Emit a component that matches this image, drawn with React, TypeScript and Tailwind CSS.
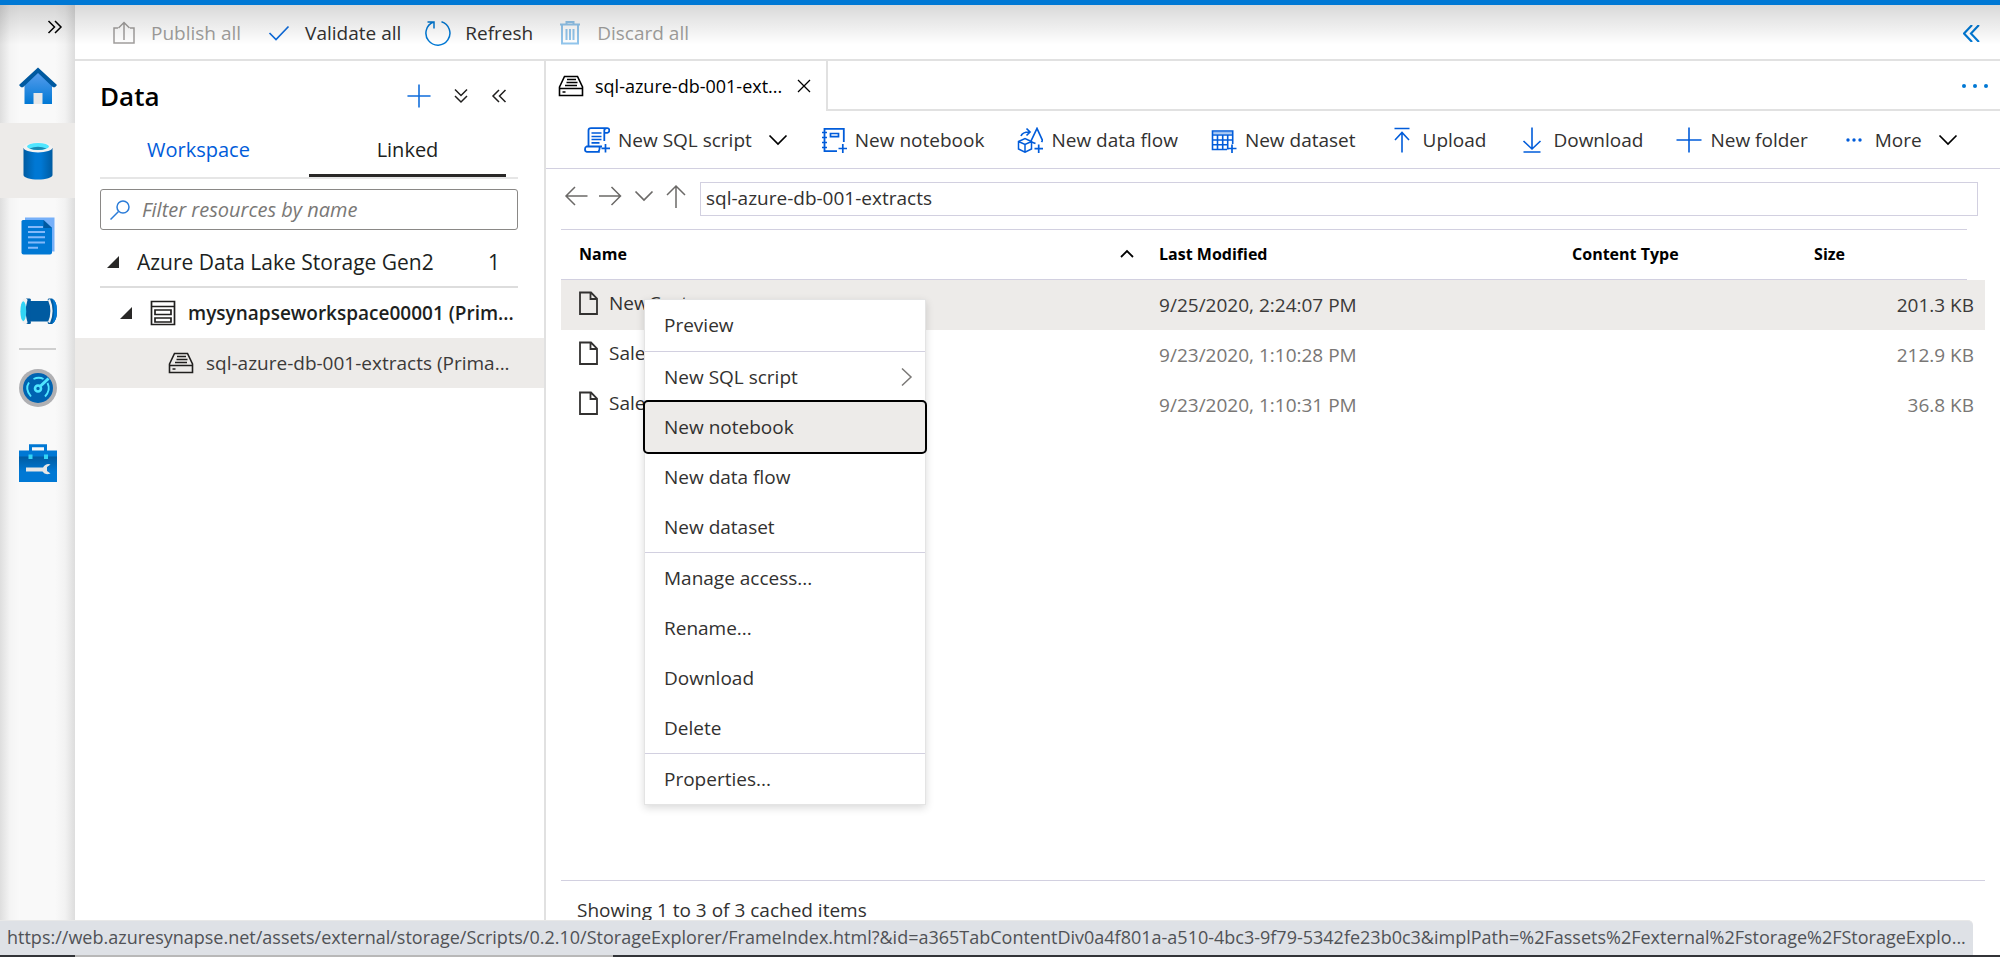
import { useState, type ReactNode } from "react";
import clsx from "clsx";

type IconProps = { className?: string };

function Svg({
  size = 26,
  box = "0 0 26 26",
  className,
  children,
}: {
  size?: number;
  box?: string;
  className?: string;
  children: ReactNode;
}) {
  return (
    <svg
      width={size}
      height={size}
      viewBox={box}
      fill="none"
      stroke="currentColor"
      strokeWidth="1.5"
      className={clsx("shrink-0", className)}
      aria-hidden
    >
      {children}
    </svg>
  );
}

/* ---------- line icons ---------- */

const PublishIcon = () => (
  <Svg>
    <path d="M7 8H3v15h20V8h-4M13 20V3M7.500 8L13 2.500 18.500 8" />
  </Svg>
);

const CheckIcon = () => (
  <Svg>
    <path d="M4.500 13l6.500 6.500L23.500 6.500" strokeWidth="1.700" />
  </Svg>
);

const RefreshIcon = () => (
  <Svg>
    <path d="M16.500 1.700A12 12 0 1 1 8.500 2M2.500 2H9v6.500" strokeWidth="1.500" />
  </Svg>
);

const TrashIcon = () => (
  <Svg>
    <path d="M3 4.500h20M5 5v18.500h16V5M9.500 4.500V2h7v2.500M9.500 9v11M13 9v11M16.500 9v11" strokeWidth="2" />
  </Svg>
);

const DriveIcon = ({ className }: IconProps) => (
  <Svg className={className}>
    <path d="M1.500 14L6.500 3.500h13L24.500 14v8.500h-23zM1.500 15.500h23M4.500 19h3" strokeWidth="1.600" />
    <path d="M9 6.500h9M8.500 9.500h11M7 12.500h12" strokeWidth="1.400" />
  </Svg>
);

const ContainerIcon = () => (
  <Svg>
    <path d="M1.500 1.500h23v23h-23zM1.500 6.500h23M5 10h16v4.500H5zM5 18h16v4H5z" strokeWidth="1.700" />
  </Svg>
);

const ScriptIcon = () => (
  <Svg>
    <path
      d="M4.500 19.500V3.500Q4.500 1.200 7 1.200h16.300q2 0 2 2.200t-2 2.400h-3V14M20.300 6V3.500q0-2.200 2.500-2.300M18 19.500H2.500Q1 20 1 22.300t1.800 2.500h13M4.500 19.500h11q.5 3-1 5"
      strokeWidth="1.800"
    />
    <path d="M7.500 6h10M7.500 9.500h10M7.500 12.500h10M7.500 15.800h8M21.500 17v8.500M17.500 21.300h8.500" strokeWidth="1.700" />
  </Svg>
);

const NotebookIcon = () => (
  <Svg>
    <path d="M16 24.200H3.500V1.800h19.300V15" strokeWidth="1.800" />
    <path d="M1 5.500h5M1 10.500h5M1 15.500h5M1 20.500h5M9.500 6.500h8v3.200h-8zM21.800 17v9M17.500 21.500h8.500" strokeWidth="1.700" />
  </Svg>
);

const DataFlowIcon = () => (
  <Svg>
    <path d="M1.500 14.500l6.500-3 6.500 3v7.500L8 25.200 1.500 22zM1.500 14.500L8 17.500l6.500-3M8 17.500v7.500" />
    <path d="M4 9Q5.500 5 12 5M9.500 1.500L13 5 9.500 8.500M14 14l6-12.500 5.500 12-1 1.500M14.500 15l4 1.500M21.700 17.500v8.500M17.500 21.700H26" strokeWidth="1.700" />
  </Svg>
);

const DatasetIcon = () => (
  <Svg>
    <path d="M16 22.500H1.500V4h20.200v13M1.500 8h20M1.500 13h20M1.500 17.800h15M6.500 8v14.500M11.700 8v14.500M16.700 8v14.500" strokeWidth="1.600" />
    <path d="M2 5.800h19" strokeWidth="2" opacity=".4" />
    <path d="M21 17.500V26M17 21.500h8.500" strokeWidth="1.700" />
  </Svg>
);

const UploadIcon = () => (
  <Svg>
    <path d="M5.500 1.500h15M13 25.500V5.500M6 13l7-7.500 7 7.500" strokeWidth="1.600" />
  </Svg>
);

const DownloadIcon = () => (
  <Svg>
    <path d="M4.500 25h17M13 .5v21.500M4.500 14l8.500 8 8.500-8" strokeWidth="1.600" />
  </Svg>
);

const PlusIcon = () => (
  <Svg>
    <path d="M13 .5v25M.5 13h25" strokeWidth="1.600" />
  </Svg>
);

const MoreIcon = () => (
  <Svg>
    <g fill="currentColor" stroke="none">
      <circle cx="7" cy="13" r="1.700" />
      <circle cx="13" cy="13" r="1.700" />
      <circle cx="19" cy="13" r="1.700" />
    </g>
  </Svg>
);

const ChevronDown = () => (
  <Svg size={20} box="0 0 20 20">
    <path d="M1.500 5.500L10 14l8.500-8.500" strokeWidth="1.700" />
  </Svg>
);

const ChevronsIcon = ({ className }: IconProps) => (
  <Svg size={16} box="0 0 16 16" className={className}>
    <path d="M8 2L2 8l6 6M14.500 2l-6 6 6 6" strokeWidth="1.500" />
  </Svg>
);

const FileIcon = () => (
  <Svg>
    <path d="M5 2.500h11l6 6V24H5zM15.500 2.500v6.500h6.500" strokeWidth="1.800" />
  </Svg>
);

const Caret = () => (
  <svg width="12" height="12" viewBox="0 0 12 12" className="shrink-0" aria-hidden>
    <path d="M12 0v12H0z" fill="#292827" />
  </svg>
);

/* ---------- coloured rail icons ---------- */

const HomeIcon = () => (
  <svg width="38" height="38" viewBox="0 0 38 38" aria-hidden>
    <defs>
      <linearGradient id="home" x1="0" y1="0" x2="0" y2="1">
        <stop offset="0" stopColor="#5ea0ef" />
        <stop offset="1" stopColor="#0078d4" />
      </linearGradient>
    </defs>
    <path d="M19 3L33 16.500V37H5.500V16.500z" fill="url(#home)" />
    <path d="M14.500 26h9v11h-9z" fill="#e8e8e8" />
    <path d="M19 .5L38 18l-2 2.300h-2L19 6 4 20.300H2L0 18z" fill="#0059a0" />
  </svg>
);

const DatabaseIcon = () => (
  <svg width="38" height="38" viewBox="0 0 38 38" aria-hidden>
    <defs>
      <linearGradient id="db" x1="0" y1="0" x2="1" y2="0">
        <stop offset="0" stopColor="#005ba1" />
        <stop offset=".4" stopColor="#0078d4" />
        <stop offset=".6" stopColor="#0078d4" />
        <stop offset="1" stopColor="#005ba1" />
      </linearGradient>
    </defs>
    <path d="M4.500 6v27c0 2.600 6.500 4.500 14.500 4.500s14.500-1.900 14.500-4.500V6z" fill="url(#db)" />
    <ellipse cx="19" cy="5.500" rx="14.500" ry="5" fill="#f2f2f2" />
    <ellipse cx="19" cy="4.500" rx="11" ry="3.500" fill="#50e6ff" />
    <path d="M10.500 6.500Q19 2.900 27.500 6.500 19 9.500 10.500 6.500z" fill="#198ab3" />
  </svg>
);

const DocsIcon = () => (
  <svg width="38" height="38" viewBox="0 0 38 38" aria-hidden>
    <path d="M6 .5h29.500v34H6z" fill="#76b0f9" />
    <path d="M4 3h20.500L33 11v24.500q0 2-2 2H4.500q-2 0-2-2V4.500Q2.500 3 4 3z" fill="#0078d4" />
    <path d="M24.500 3L33 11h-8.500z" fill="#0059a0" />
    <path d="M9 10h15M9 15h17M9 20.300h17M9 25.500h17M9 30.700h10" stroke="#83b9f9" strokeWidth="2" />
  </svg>
);

const PipeIcon = () => (
  <svg width="38" height="38" viewBox="0 0 38 38" aria-hidden>
    <path d="M8 9h22v20.500H8z" fill="#005ba1" />
    <path d="M7 6.500h3.500q2 0 1.200 2.500v20.500q.8 2.500-1.200 2.500H7z" fill="#005ba1" />
    <path d="M5 6.500h1.500Q9.500 6.500 8 10q-2.500 9 0 18.500Q9.500 32 6.500 32H5Q1.200 29 1.200 19T5 6.500z" fill="#f2f2f2" />
    <ellipse cx="4.300" cy="19.200" rx="2.900" ry="10" fill="#32d4f5" />
    <path d="M29.500 6.500h3.500Q38 9 38 19t-5 13h-3.500q-1.500-1-.5-2.500V9q-1-1.500.5-2.500z" fill="#005ba1" />
    <path d="M33 6.500Q38 9 38 19t-5 13q2-5 2-13t-2-12.500z" fill="#0078d4" />
    <path d="M30 7.500q5 11.500 0 23" stroke="#f2f2f2" strokeWidth="2.200" fill="none" />
  </svg>
);

const GaugeIcon = () => (
  <svg width="38" height="38" viewBox="0 0 38 38" aria-hidden>
    <circle cx="19" cy="19" r="19" fill="#b0b0b3" />
    <circle cx="19" cy="19" r="15" fill="#0063b1" />
    <g fill="none" stroke="#50e6ff" strokeWidth="1.900">
      <path d="M12 27.500Q5.500 20 10 13.500M26 27.500Q32 21 28.500 14M14.500 10Q20 7.500 24.500 10" />
      <circle cx="19" cy="19.500" r="3" strokeWidth="2.600" />
      <path d="M21.500 17L29.500 9.500" strokeWidth="3" />
    </g>
  </svg>
);

const ToolboxIcon = () => (
  <svg width="38" height="38" viewBox="0 0 38 38" aria-hidden>
    <defs>
      <linearGradient id="toolbox" x1="0" y1="0" x2="0" y2="1">
        <stop offset="0" stopColor="#005ba1" />
        <stop offset=".6" stopColor="#0078d4" />
      </linearGradient>
    </defs>
    <path d="M11.500 7V1.800h15V7" stroke="#0078d4" strokeWidth="3" fill="none" />
    <path d="M0 6.500h38V14H0z" fill="#0078d4" />
    <path d="M0 12.500h38V38H0z" fill="url(#toolbox)" />
    <path d="M9.500 10.500h4v4.500h-4zM25 10.500h4v4.500h-4z" fill="#32d4f5" />
    <path d="M7 23.500h17Q26 20 29.500 20l2 .5-3.500 2.500v4l3.500 2.500q-5.500 2-8-2H7z" fill="#e6e6e6" />
  </svg>
);

/* ---------- data ---------- */

const RAIL_TOP = [
  { label: "Home", icon: <HomeIcon /> },
  { label: "Data", icon: <DatabaseIcon /> },
  { label: "Develop", icon: <DocsIcon /> },
  { label: "Integrate", icon: <PipeIcon /> },
];

const RAIL_BOTTOM = [
  { label: "Monitor", icon: <GaugeIcon /> },
  { label: "Manage", icon: <ToolboxIcon /> },
];

const COMMANDS = [
  { label: "New SQL script", icon: <ScriptIcon />, menu: true },
  { label: "New notebook", icon: <NotebookIcon /> },
  { label: "New data flow", icon: <DataFlowIcon /> },
  { label: "New dataset", icon: <DatasetIcon /> },
  { label: "Upload", icon: <UploadIcon /> },
  { label: "Download", icon: <DownloadIcon /> },
  { label: "New folder", icon: <PlusIcon /> },
  { label: "More", icon: <MoreIcon />, menu: true },
];

const FILES = [
  { name: "NewCust", modified: "9/25/2020, 2:24:07 PM", size: "201.3 KB" },
  { name: "Sale", modified: "9/23/2020, 1:10:28 PM", size: "212.9 KB" },
  { name: "Sale", modified: "9/23/2020, 1:10:31 PM", size: "36.8 KB" },
];

const MENU_GROUPS = [
  ["Preview"],
  ["New SQL script", "New notebook", "New data flow", "New dataset"],
  ["Manage access...", "Rename...", "Download", "Delete"],
  ["Properties..."],
];

const STATUS_URL =
  "https://web.azuresynapse.net/assets/external/storage/Scripts/0.2.10/StorageExplorer/FrameIndex.html?&id=a365TabContentDiv0a4f801a-a510-4bc3-9f79-5342fe23b0c3&implPath=%2Fassets%2Fexternal%2Fstorage%2FStorageExplo...";

/* ---------- sections ---------- */

function Rail() {
  const [active, setActive] = useState("Data");
  const item = ({ label, icon }: { label: string; icon: ReactNode }) => (
    <button
      key={label}
      aria-label={label}
      onClick={() => setActive(label)}
      className={clsx("flex h-[75px] w-full items-center justify-center", active === label && "bg-[#edebe9]")}
    >
      {icon}
    </button>
  );

  return (
    <nav className="flex w-[75px] shrink-0 flex-col bg-[linear-gradient(to_right,#dedede,#f4f4f4_10px,#f9f9f9_20px,#f9f9f9_55px,#f2f2f2_65px,#dddddd)]">
      <button aria-label="Expand" className="flex h-[43px] items-center justify-end pr-3">
        <ChevronsIcon className="rotate-180" />
      </button>
      {RAIL_TOP.map(item)}
      <hr className="mx-[19px] border-t-2 border-[#cfcfcf]" />
      {RAIL_BOTTOM.map(item)}
    </nav>
  );
}

function TopBar() {
  const button = "flex items-center gap-[14px]";
  return (
    <div className="flex h-[56px] shrink-0 items-center border-b-2 border-[#e1e1e1] pt-[2px] pr-5 pl-9">
      <div className="flex flex-1 items-center gap-6 text-[#323130]">
        <button disabled className={clsx(button, "text-[#a19f9d]")}>
          <PublishIcon />
          Publish all
        </button>
        <button className={button}>
          <span className="text-[#0f6cdb]">
            <CheckIcon />
          </span>
          Validate all
        </button>
        <button className={button}>
          <span className="text-[#0078d4]">
            <RefreshIcon />
          </span>
          Refresh
        </button>
        <button disabled className={clsx(button, "text-[#a19f9d]")}>
          <span className="text-[#92c5ec]">
            <TrashIcon />
          </span>
          Discard all
        </button>
      </div>
      <button aria-label="Collapse" className="text-[#0078d4]">
        <Svg size={17} box="0 0 16 16">
          <path d="M8.500 0L1 8l7.500 8M15 0L7.500 8l7.500 8" strokeWidth="2" />
        </Svg>
      </button>
    </div>
  );
}

function DataPanel() {
  return (
    <section className="flex w-[471px] shrink-0 flex-col border-r-2 border-[#e1e1e1]">
      <div className="flex h-[70px] items-center pr-[37px] pl-[25px]">
        <h1 className="flex-1 text-[26px] font-semibold text-black">Data</h1>
        <div className="flex items-center gap-[22px] text-[#201f1e]">
          <button aria-label="Add" className="text-[#0f6cdb]">
            <Svg size={24} box="0 0 26 26">
              <path d="M13 .5v25M.5 13h25" strokeWidth="1.700" />
            </Svg>
          </button>
          <button aria-label="Expand all">
            <ChevronsIcon className="-rotate-90" />
          </button>
          <button aria-label="Collapse panel">
            <ChevronsIcon />
          </button>
        </div>
      </div>

      <div role="tablist" className="mr-[26px] ml-[25px] flex h-[48px] gap-3 border-b-2 border-[#e6e6e6] text-[20px]">
        <button role="tab" className="w-[197px] pb-2 text-[#015cda]">
          Workspace
        </button>
        <button role="tab" aria-selected className="w-[197px] border-b-[3px] border-[#292827] pb-[5px] text-[#201f1e]">
          Linked
        </button>
      </div>

      <label className="mt-[10px] mr-[26px] ml-[25px] flex h-[41px] items-center gap-3 rounded-[3px] border border-[#8a8886] px-[9px]">
        <Svg size={20} box="0 0 20 20" className="text-[#2b7cd8]">
          <circle cx="13" cy="7" r="6" />
          <path d="M8.500 11.500L.5 19.500" />
        </Svg>
        <input
          type="text"
          aria-label="Filter resources by name"
          placeholder="Filter resources by name"
          className="w-full bg-transparent text-[20px] italic outline-none placeholder:text-[#7a7876]"
        />
      </label>

      <div className="mr-[26px] ml-[25px] flex h-[58px] items-center border-b-2 border-[#dddddd] pt-2 pr-[18px] pl-[7px] text-[21px] text-[#201f1e]">
        <Caret />
        <span className="ml-[18px] flex-1">Azure Data Lake Storage Gen2</span>
        <span>1</span>
      </div>
      <div className="flex h-[50px] items-center pl-[45px] text-[#201f1e]">
        <Caret />
        <span className="mx-3 ml-[18px]">
          <ContainerIcon />
        </span>
        <span className="font-semibold whitespace-nowrap">mysynapseworkspace00001 (Prim...</span>
      </div>
      <div className="flex h-[50px] items-center gap-3 bg-[#edebe9] pl-[93px] text-[#3b3a39]">
        <DriveIcon className="text-[#201f1e]" />
        <span className="whitespace-nowrap">sql-azure-db-001-extracts (Prima...</span>
      </div>
    </section>
  );
}

function CommandBar() {
  return (
    <div className="flex h-[58px] shrink-0 items-center gap-[33px] border-b border-[#d2d0e0] pl-[38px] whitespace-nowrap text-[#323130]">
      {COMMANDS.map((c) => (
        <button key={c.label} className="flex items-center gap-2">
          <span className="text-[#015cda]">{c.icon}</span>
          {c.label}
          {c.menu && (
            <span className="pl-2 text-black">
              <ChevronDown />
            </span>
          )}
        </button>
      ))}
    </div>
  );
}

function PathBar() {
  return (
    <div className="flex h-[60px] shrink-0 items-center gap-2 pr-[22px] pl-[18px] text-[#6b6967]">
      <div className="flex w-[128px] items-center gap-[9px] pb-[6px]">
        <button aria-label="Back">
          <Svg>
            <path d="M23.500 13H2M11 4L2 13l9 9" />
          </Svg>
        </button>
        <button aria-label="Forward">
          <Svg>
            <path d="M0 13h21.500M12.500 4l9 9-9 9" />
          </Svg>
        </button>
        <button aria-label="History">
          <ChevronDown />
        </button>
        <button aria-label="Up">
          <Svg>
            <path d="M13 25V3M4 12l9-9 9 9" />
          </Svg>
        </button>
      </div>
      <input
        aria-label="Path"
        defaultValue="sql-azure-db-001-extracts"
        className="h-[34px] flex-1 border border-[#d2d0e0] px-[5px] pb-[2px] text-[#323130] outline-none"
      />
    </div>
  );
}

function ContextMenu() {
  return (
    <div
      role="menu"
      className="absolute top-[19px] left-[83px] z-10 w-[282px] border border-[#e4e4e4] bg-white text-[#323130] shadow-[0_3px_8px_rgba(0,0,0,0.15)]"
    >
      {MENU_GROUPS.map((group) => (
        <div key={group[0]} className="border-t border-[#d2d0e0] first:border-t-0 first:pb-px">
          {group.map((label) => (
            <button
              key={label}
              role="menuitem"
              className={clsx(
                "flex h-[50px] w-full items-center justify-between px-[19px] text-left",
                label === "New notebook" && "rounded-[3px] bg-[#edebe9] outline-2 outline-black",
              )}
            >
              {label}
              {label === "New SQL script" && (
                <Svg size={20} box="0 0 20 20" className="-mr-2 text-[#7a7876]">
                  <path d="M8 1.500l9 8.500-9 8.500" />
                </Svg>
              )}
            </button>
          ))}
        </div>
      ))}
    </div>
  );
}

function FileTable() {
  const head = "flex h-[51px] items-center border-y border-[#d2d0e0] pb-px";
  return (
    <div className="mx-[15px] flex-1">
      <table className="w-full table-fixed border-collapse text-left">
        <colgroup>
          <col className="w-[42%]" />
          <col className="w-[29%]" />
          <col className="w-[17%]" />
          <col />
        </colgroup>
        <thead className="text-[16px] text-black">
          <tr>
            <th>
              <div className={clsx(head, "justify-between pr-[25px] pl-[18px]")}>
                Name
                <Svg size={14} box="0 0 14 14">
                  <path d="M1 10l6-6 6 6" strokeWidth="1.800" />
                </Svg>
              </div>
            </th>
            <th>
              <div className={head}>Last Modified</div>
            </th>
            <th>
              <div className={head}>Content Type</div>
            </th>
            <th>
              <div className={clsx(head, "mr-[18px]")}>Size</div>
            </th>
          </tr>
        </thead>
        <tbody>
          {FILES.map((file, i) => (
            <tr
              key={file.modified}
              className={clsx("h-[50px]", i === 0 ? "bg-[#edebe9] text-[#3b3a39]" : "text-[#797775]")}
            >
              <td className="relative p-0">
                <div className="flex items-center gap-2 pb-1 pl-[14px] text-[#323130]">
                  <FileIcon />
                  {file.name}
                </div>
                {i === 0 && <ContextMenu />}
              </td>
              <td className="p-0">{file.modified}</td>
              <td />
              <td className="p-0 pr-[11px] text-right">{file.size}</td>
            </tr>
          ))}
        </tbody>
      </table>
    </div>
  );
}

function Explorer() {
  return (
    <section className="flex min-w-0 flex-1 flex-col">
      <div className="flex h-[50px] shrink-0">
        <div className="flex w-[282px] shrink-0 items-center border-r-2 border-[#e1e1e1] pr-[15px] pl-3 text-black">
          <DriveIcon />
          <span className="ml-[11px] flex-1 text-[18px] font-medium whitespace-nowrap">sql-azure-db-001-ext...</span>
          <button aria-label="Close tab">
            <Svg size={14} box="0 0 14 14">
              <path d="M1 1l12 12M13 1L1 13" strokeWidth="1.300" />
            </Svg>
          </button>
        </div>
        <div className="flex flex-1 items-center justify-end border-b-2 border-[#e1e1e1] pr-[10px]">
          <button aria-label="More tabs" className="text-[#0078d4]">
            <Svg size={30} box="0 0 30 30">
              <g fill="currentColor" stroke="none">
                <circle cx="4" cy="16" r="2" />
                <circle cx="15" cy="16" r="2" />
                <circle cx="26" cy="16" r="2" />
              </g>
            </Svg>
          </button>
        </div>
      </div>
      <CommandBar />
      <PathBar />
      <FileTable />
      <div className="mx-[15px] h-[75px] shrink-0 border-t border-[#d2d0e0] pt-[15px] pl-4 text-[#323130]">
        Showing 1 to 3 of 3 cached items
      </div>
    </section>
  );
}

export default function App() {
  return (
    <div className="relative flex h-screen flex-col overflow-hidden bg-white font-['Segoe_UI','Open_Sans',sans-serif] text-[19px] leading-7">
      <div className="h-[5px] shrink-0 bg-[#0078d4]" />
      <div className="relative flex min-h-0 flex-1">
        <Rail />
        <div className="flex min-w-0 flex-1 flex-col">
          <TopBar />
          <div className="flex min-h-0 flex-1">
            <DataPanel />
            <Explorer />
          </div>
        </div>
        <div className="pointer-events-none absolute inset-x-0 top-0 h-10 bg-linear-to-b from-black/15 to-transparent" />
      </div>
      <div className="flex h-[2px] shrink-0 bg-[#323438]">
        <div className="ml-[75px] w-[538px] bg-[#b8b8b8]" />
      </div>
      <div className="absolute bottom-[2px] left-0 rounded-tr-[5px] border-t border-[#e8e8e8] bg-[#dee1e6] px-[7px] pt-[2px] pb-1 text-[18px] whitespace-nowrap text-[#505256]">
        {STATUS_URL}
      </div>
    </div>
  );
}
